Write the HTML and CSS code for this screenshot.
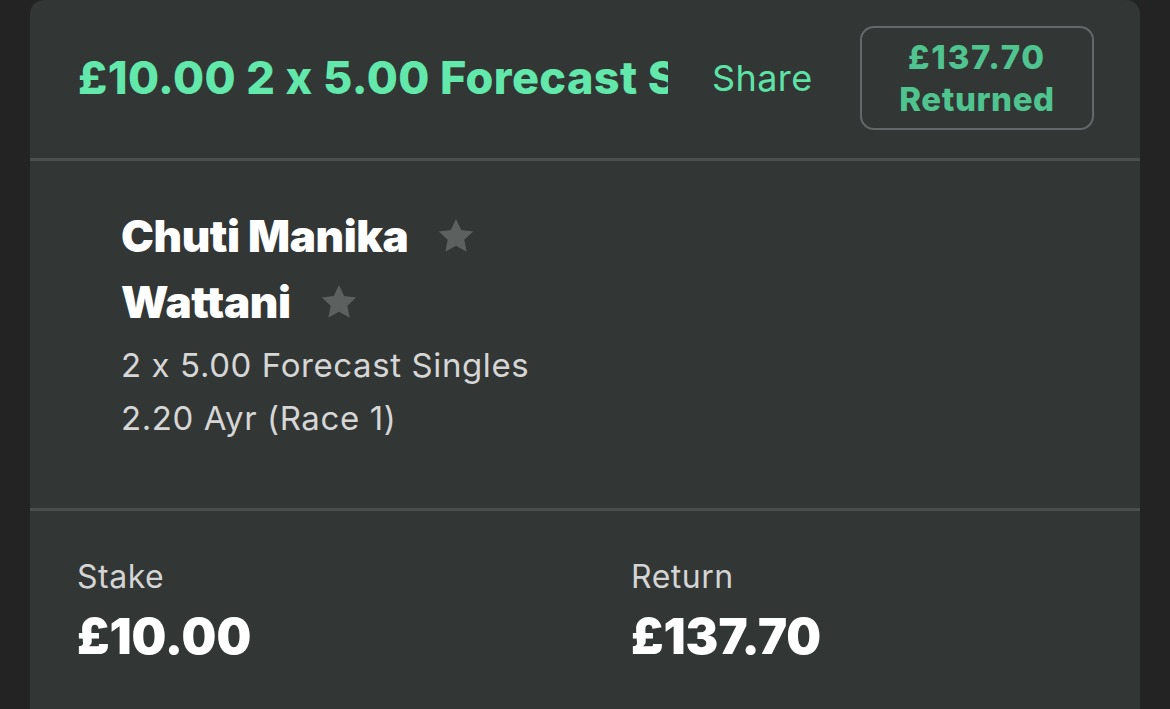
FILE: index.html
```html
<!DOCTYPE html>
<html>
<head>
<meta charset="utf-8">
<link rel="stylesheet" href="styles.css">
</head>
<body>
<div class="card">
  <div class="head">
    <div class="title">£10.00 2 x 5.00 Forecast Singles</div>
    <div class="share">Share</div>
    <div class="returned">
      <div class="ret-amt">£137.70</div>
      <div class="ret-lbl">Returned</div>
    </div>
  </div>
  <div class="body">
    <div class="runner"><span class="name">Chuti Manika</span><svg class="star" viewBox="0 0 24 24"><path d="M12 1.8l3.1 6.6 7.2.9-5.3 5 1.4 7.1L12 17.9l-6.4 3.5 1.4-7.1-5.3-5 7.2-.9z"/></svg></div>
    <div class="runner"><span class="name">Wattani</span><svg class="star" viewBox="0 0 24 24"><path d="M12 1.8l3.1 6.6 7.2.9-5.3 5 1.4 7.1L12 17.9l-6.4 3.5 1.4-7.1-5.3-5 7.2-.9z"/></svg></div>
    <div class="meta first">2 x 5.00 Forecast Singles</div>
    <div class="meta">2.20 Ayr (Race 1)</div>
  </div>
  <div class="foot">
    <div class="col">
      <div class="lbl">Stake</div>
      <div class="val">£10.00</div>
    </div>
    <div class="col">
      <div class="lbl">Return</div>
      <div class="val">£137.70</div>
    </div>
  </div>
</div>
</body>
</html>
```
FILE: styles.css
```css
html, body {
  margin: 0;
  padding: 0;
  background: #232323;
  height: 709px;
  overflow: hidden;
}
body {
  font-family: Inter, "Noto Sans", sans-serif;
  font-feature-settings: "calt" 0;
  padding: 0 30px;
}
.card {
  background: #323635;
  border-radius: 14px 14px 0 0;
  height: 709px;
}
.head {
  display: flex;
  align-items: center;
  height: 158px;
  padding: 0 46px 0 48px;
  border-bottom: 3px solid #4a4e4d;
}
.title {
  width: 590px;
  flex-shrink: 0;
  overflow: hidden;
  white-space: nowrap;
  color: #62e8ab;
  font-size: 45px;
  font-weight: 800;
  letter-spacing: 0.4px;
  margin-top: -3px;
}
.share {
  margin-left: 44px;
  color: #5ee3a6;
  font-size: 36px;
  letter-spacing: 0.4px;
  font-weight: 400;
  margin-top: -3px;
}
.returned {
  margin-left: auto;
  width: 230px;
  height: 100px;
  border: 2px solid #63676a;
  border-radius: 14px;
  display: flex;
  flex-direction: column;
  justify-content: center;
  align-items: center;
  color: #50c48f;
  font-weight: 800;
  font-size: 33px;
  line-height: 42px;
  letter-spacing: 0.6px;
  margin-top: -3px;
}
.ret-amt {
  letter-spacing: 1.8px;
}
.body {
  height: 350px;
  box-sizing: border-box;
  padding: 42px 0 0 91px;
  border-bottom: 3px solid #4a4e4d;
}
.runner {
  display: flex;
  align-items: center;
  height: 66px;
}
.name {
  color: #ffffff;
  font-size: 44px;
  font-weight: 900;
  letter-spacing: -0.4px;
}
.star {
  width: 40px;
  height: 40px;
  margin-left: 28px;
  fill: #5c605f;
}
.meta {
  color: #d6d6d6;
  font-size: 33px;
  letter-spacing: 0.6px;
  line-height: 53px;
}
.meta.first {
  margin-top: 4px;
}
.foot {
  display: grid;
  grid-template-columns: 554px 1fr;
  padding: 46px 0 0 47px;
}
.lbl {
  color: #d4d4d4;
  font-size: 32px;
  letter-spacing: 0.5px;
  line-height: 40px;
}
.val {
  color: #ffffff;
  font-size: 49px;
  font-weight: 900;
  margin-top: 10px;
  letter-spacing: 0px;
}
```
